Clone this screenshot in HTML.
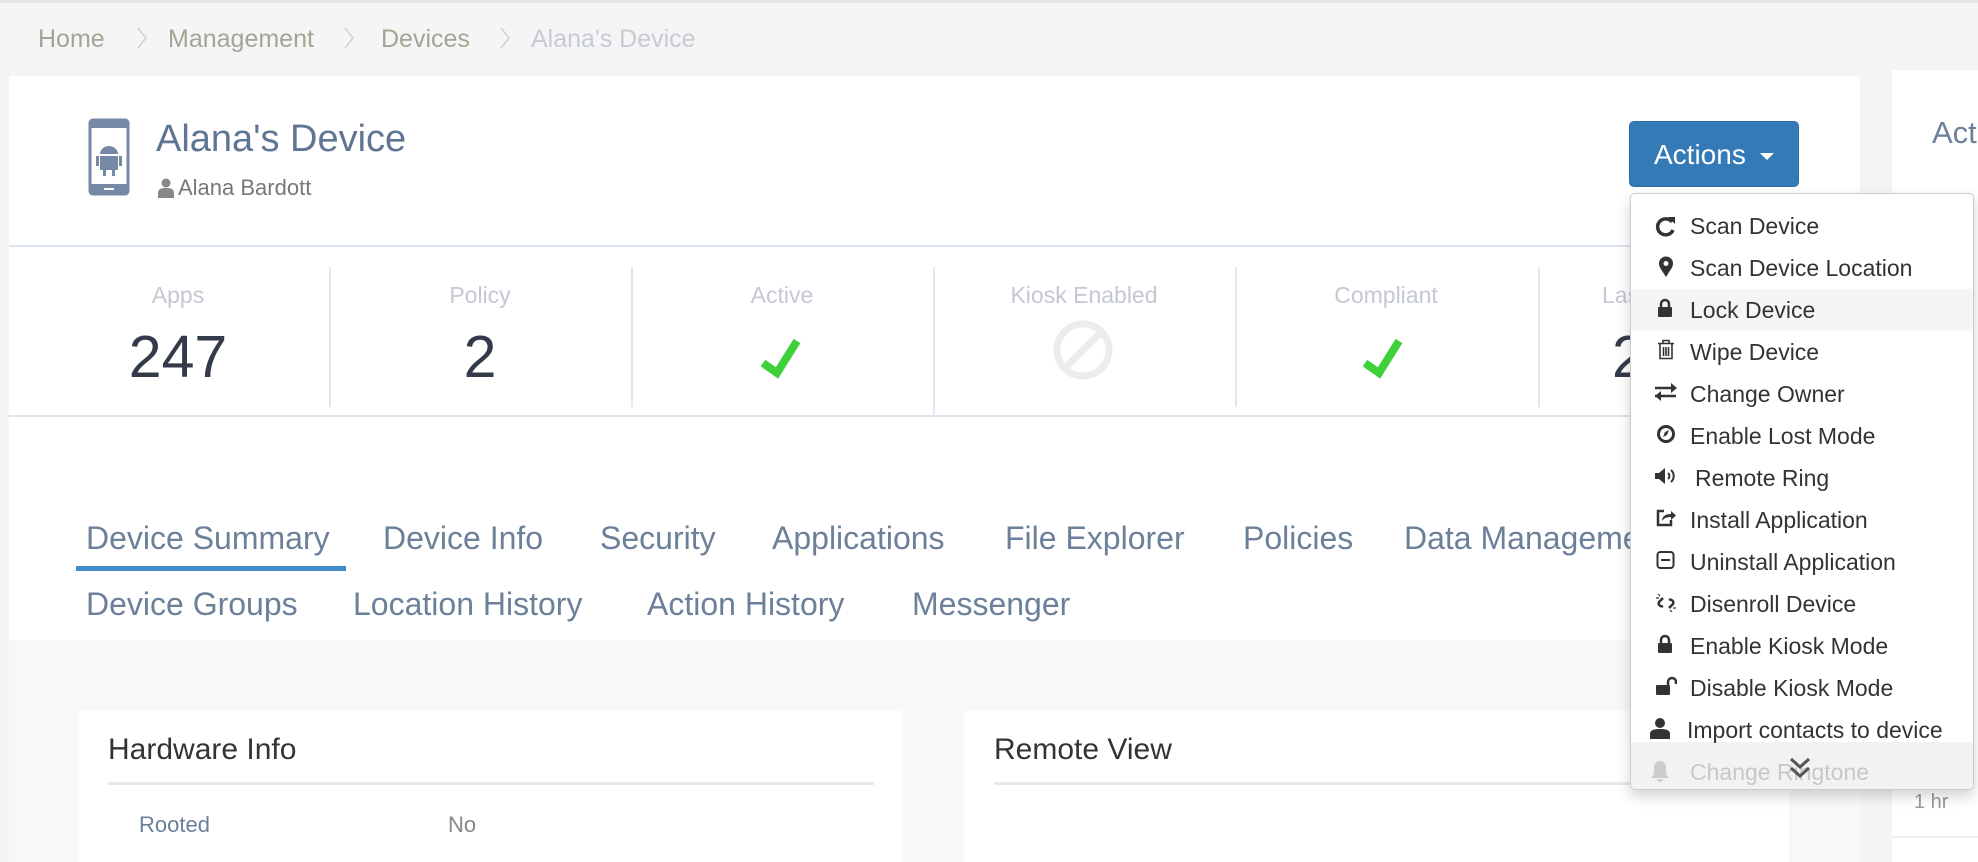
<!DOCTYPE html>
<html><head><meta charset="utf-8"><style>
*{margin:0;padding:0;box-sizing:border-box}
body{width:1978px;height:862px;overflow:hidden;background:#f5f5f5;font-family:"Liberation Sans",sans-serif;position:relative}
.a{position:absolute;white-space:nowrap}
.bc{top:25px;font-size:25px;color:#a4a494}
.sep{top:26px}
.lbl{top:282px;font-size:23px;color:#c3c8d2;text-align:center;width:302px}
.val{top:323px;font-size:59px;color:#333a4a;text-align:center;width:302px}
.vs{position:absolute;top:267px;width:2px;height:140px;background:#e1e7ee}
.tab{font-size:32px;color:#6c809a;top:520px}
.tab2{top:586px}
.mi{left:1690px;font-size:23px;color:#333}
</style></head><body>
<div class="a" style="left:0;top:0;width:1978px;height:3px;background:#e6e6e6"></div>
<div class="a bc" style="left:38px">Home</div>
<svg class="a sep" style="left:136px" width="12" height="24"><path d="M2 2l8 10-8 10" fill="none" stroke="#d0d0d0" stroke-width="1.5"/></svg>
<div class="a bc" style="left:168px">Management</div>
<svg class="a sep" style="left:343px" width="12" height="24"><path d="M2 2l8 10-8 10" fill="none" stroke="#d0d0d0" stroke-width="1.5"/></svg>
<div class="a bc" style="left:381px">Devices</div>
<svg class="a sep" style="left:499px" width="12" height="24"><path d="M2 2l8 10-8 10" fill="none" stroke="#d0d0d0" stroke-width="1.5"/></svg>
<div class="a bc" style="left:531px;color:#c5cad4">Alana's Device</div>

<div class="a" style="left:9px;top:76px;width:1851px;height:564px;background:#fff"></div>
<div class="a" style="left:9px;top:640px;width:1851px;height:222px;background:#f8f8f8"></div>
<div class="a" style="left:1892px;top:70px;width:86px;height:792px;background:#fff"></div>
<div class="a" style="left:1932px;top:115px;font-size:31px;color:#6c809a">Actions</div>
<div class="a" style="left:1892px;top:836px;width:86px;height:2px;background:#eee"></div>
<div class="a" style="left:1914px;top:791px;font-size:20px;color:#999">1 hr</div>

<svg class="a" style="left:88px;top:118px" width="42" height="78" viewBox="0 0 42 78">
<rect x="2" y="2" width="38" height="74" rx="3" fill="none" stroke="#7589a6" stroke-width="3"/>
<rect x="2" y="2" width="38" height="8" fill="#7589a6"/><rect x="2" y="66" width="38" height="10" fill="#7589a6"/>
<rect x="16" y="70" width="10" height="2" fill="#fff"/>
<path d="M12 36a9 8 0 0 1 18 0z" fill="#7589a6"/><rect x="12" y="38" width="18" height="14" fill="#7589a6"/>
<rect x="8" y="38" width="3" height="10" fill="#7589a6"/><rect x="31" y="38" width="3" height="10" fill="#7589a6"/>
<rect x="15" y="52" width="3" height="6" fill="#7589a6"/><rect x="24" y="52" width="3" height="6" fill="#7589a6"/>
</svg>
<div class="a" style="left:156px;top:118px;font-size:38px;color:#5f7593">Alana's Device</div>
<svg class="a" style="left:158px;top:178px" width="16" height="20" viewBox="0 0 16 20"><circle cx="8" cy="5" r="4.5" fill="#888"/><path d="M0 20v-5c0-4 3-5 8-5s8 1 8 5v5z" fill="#888"/></svg>
<div class="a" style="left:178px;top:175px;font-size:22px;color:#777">Alana Bardott</div>

<div class="a" style="left:9px;top:245px;width:1851px;height:2px;background:#dce5ee"></div>
<div class="a" style="left:9px;top:415px;width:1851px;height:2px;background:#dce5ee"></div>
<div class="vs" style="left:329px"></div><div class="vs" style="left:631px"></div><div class="vs" style="left:933px;height:150px"></div><div class="vs" style="left:1235px"></div><div class="vs" style="left:1538px"></div>

<div class="a lbl" style="left:27px">Apps</div><div class="a val" style="left:27px">247</div>
<div class="a lbl" style="left:329px">Policy</div><div class="a val" style="left:329px">2</div>
<div class="a lbl" style="left:631px">Active</div>
<div class="a lbl" style="left:933px">Kiosk Enabled</div>
<div class="a lbl" style="left:1235px">Compliant</div>
<div class="a" style="left:1602px;top:282px;font-size:23px;color:#c3c8d2">Last Scanned</div>
<div class="a" style="left:1612px;top:323px;font-size:59px;color:#333a4a">2 hrs</div>
<svg class="a" style="left:755px;top:333px" width="56" height="50"><path d="M8 30l14 10 20-32" fill="none" stroke="#3fd13a" stroke-width="8"/></svg>
<svg class="a" style="left:1053px;top:320px" width="60" height="60"><circle cx="30" cy="30" r="26" fill="none" stroke="#ececec" stroke-width="7"/><path d="M12 48L48 12" stroke="#ececec" stroke-width="7"/></svg>
<svg class="a" style="left:1357px;top:333px" width="56" height="50"><path d="M8 30l14 10 20-32" fill="none" stroke="#3fd13a" stroke-width="8"/></svg>

<div class="a tab" style="left:86px">Device Summary</div>
<div class="a" style="left:76px;top:566px;width:270px;height:5px;background:#428bca"></div>
<div class="a tab" style="left:383px">Device Info</div>
<div class="a tab" style="left:600px">Security</div>
<div class="a tab" style="left:772px">Applications</div>
<div class="a tab" style="left:1005px">File Explorer</div>
<div class="a tab" style="left:1243px">Policies</div>
<div class="a tab" style="left:1404px">Data Management</div>
<div class="a tab tab2" style="left:86px">Device Groups</div>
<div class="a tab tab2" style="left:353px">Location History</div>
<div class="a tab tab2" style="left:647px">Action History</div>
<div class="a tab tab2" style="left:912px">Messenger</div>
<div class="a" style="left:1860px;top:76px;width:32px;height:564px;background:#f5f5f5"></div>

<div class="a" style="left:78px;top:711px;width:825px;height:151px;background:#fff"></div>
<div class="a" style="left:108px;top:733px;font-size:30px;color:#333">Hardware Info</div>
<div class="a" style="left:108px;top:782px;width:766px;height:3px;background:#e8e8e8"></div>
<div class="a" style="left:139px;top:812px;font-size:22px;color:#6c809a">Rooted</div>
<div class="a" style="left:448px;top:812px;font-size:22px;color:#888">No</div>
<div class="a" style="left:964px;top:711px;width:825px;height:151px;background:#fff"></div>
<div class="a" style="left:994px;top:733px;font-size:30px;color:#333">Remote View</div>
<div class="a" style="left:994px;top:782px;width:766px;height:3px;background:#e8e8e8"></div>

<div class="a" style="left:1629px;top:121px;width:170px;height:66px;background:#337ab7;border:1px solid #2e6da4;border-radius:5px;color:#fff;font-size:28px;padding:17px 0 0 24px">Actions <span style="display:inline-block;width:0;height:0;border-left:7px solid transparent;border-right:7px solid transparent;border-top:7px solid #fff;vertical-align:middle;margin-left:6px"></span></div>

<div class="a" style="left:1630px;top:193px;width:344px;height:597px;background:#fff;border:1px solid #ccc;border-radius:5px;box-shadow:0 6px 14px rgba(0,0,0,.18);overflow:hidden">
<div style="position:absolute;left:0;top:95px;width:344px;height:42px;background:#f5f5f5"></div>
<div style="position:absolute;left:0;top:548px;width:344px;height:48px;background:#f2f2f2"></div>
</div>
<svg class="a" style="left:1655px;top:215px" width="22" height="22"><path d="M17 7A8 8 0 1 0 18 15" fill="none" stroke="#333" stroke-width="3.5"/><path d="M13 2h7v7z" fill="#333"/></svg><div class="a mi" style="top:213px">Scan Device</div>
<svg class="a" style="left:1658px;top:256px" width="16" height="22"><path d="M8 21C3 13 1 11 1 7.5a7 7 0 0 1 14 0C15 11 13 13 8 21z" fill="#333"/><circle cx="8" cy="7.5" r="2.5" fill="#fff"/></svg><div class="a mi" style="top:255px">Scan Device Location</div>
<svg class="a" style="left:1657px;top:298px" width="16" height="20"><path d="M4 9V6a4 4 0 0 1 8 0v3" fill="none" stroke="#333" stroke-width="2.5"/><rect x="1" y="9" width="14" height="10" rx="1" fill="#333"/></svg><div class="a mi" style="top:297px">Lock Device</div>
<svg class="a" style="left:1657px;top:339px" width="18" height="21"><path d="M1 4.5h16M6 4V1.5h6V4M3 5v14.5h12V5M6.5 8v9M9 8v9M11.5 8v9" fill="none" stroke="#333" stroke-width="1.6"/></svg><div class="a mi" style="top:339px">Wipe Device</div>
<svg class="a" style="left:1654px;top:383px" width="24" height="18"><path d="M1 5h19M1 13h21" stroke="#333" stroke-width="2.5"/><path d="M17 0l6 5-6 5zM7 8l-6 5 6 5z" fill="#333"/></svg><div class="a mi" style="top:381px">Change Owner</div>
<svg class="a" style="left:1656px;top:424px" width="20" height="20"><circle cx="10" cy="10" r="7.5" fill="none" stroke="#333" stroke-width="3"/><path d="M7 13l2-5 4-2-2 5z" fill="#333"/></svg><div class="a mi" style="top:423px">Enable Lost Mode</div>
<svg class="a" style="left:1654px;top:466px" width="24" height="20"><path d="M1 7h4l6-5v16l-6-5H1z" fill="#333"/><path d="M14 7a4 4 0 0 1 0 6M17 4a8 8 0 0 1 0 12" fill="none" stroke="#333" stroke-width="2"/></svg><div class="a mi" style="left:1695px;top:465px">Remote Ring</div>
<svg class="a" style="left:1655px;top:508px" width="22" height="20"><path d="M9 3H3v14h13v-5" fill="none" stroke="#333" stroke-width="2.5"/><path d="M7 13c0-5 4-7 9-7V3l5 4.5-5 4.5V9c-4 0-7 1-9 4z" fill="#333"/></svg><div class="a mi" style="top:507px">Install Application</div>
<svg class="a" style="left:1656px;top:550px" width="20" height="20"><rect x="1.5" y="2" width="16" height="16" rx="3" fill="none" stroke="#333" stroke-width="2"/><path d="M5 10h9" stroke="#333" stroke-width="2"/></svg><div class="a mi" style="top:549px">Uninstall Application</div>
<svg class="a" style="left:1655px;top:592px" width="22" height="22"><path d="M8 6L4 10a3 3 0 0 0 4 4M14 16l4-4a3 3 0 0 0-4-4" fill="none" stroke="#333" stroke-width="2.5"/><path d="M3 2l2 2M1 6h3M17 20l-2-2M21 16h-3" stroke="#333" stroke-width="1.2"/></svg><div class="a mi" style="top:591px">Disenroll Device</div>
<svg class="a" style="left:1657px;top:634px" width="16" height="20"><path d="M4 9V6a4 4 0 0 1 8 0v3" fill="none" stroke="#333" stroke-width="2.5"/><rect x="1" y="9" width="14" height="10" rx="1" fill="#333"/></svg><div class="a mi" style="top:633px">Enable Kiosk Mode</div>
<svg class="a" style="left:1655px;top:676px" width="22" height="20"><path d="M13 9V6a4 4 0 0 1 8 0v2" fill="none" stroke="#333" stroke-width="2.5"/><rect x="1" y="9" width="14" height="10" rx="1" fill="#333"/></svg><div class="a mi" style="top:675px">Disable Kiosk Mode</div>
<svg class="a" style="left:1650px;top:717px" width="20" height="22"><circle cx="10" cy="6" r="5" fill="#333"/><path d="M0 22v-5c0-4 4-5 10-5s10 1 10 5v5z" fill="#333"/></svg><div class="a mi" style="left:1687px;top:717px">Import contacts to device</div>
<svg class="a" style="left:1650px;top:760px" width="20" height="22"><path d="M10 1c-4 0-6 3-6 7v6l-3 4h18l-3-4V8c0-4-2-7-6-7zM7 19a3 3 0 0 0 6 0z" fill="#ccc"/></svg><div class="a mi" style="top:759px;color:#c8c8c8">Change Ringtone</div>
<svg class="a" style="left:1788px;top:756px" width="24" height="26"><path d="M3 3l9 8 9-8M3 12l9 8 9-8" fill="none" stroke="#555" stroke-width="3"/></svg>
</body></html>
